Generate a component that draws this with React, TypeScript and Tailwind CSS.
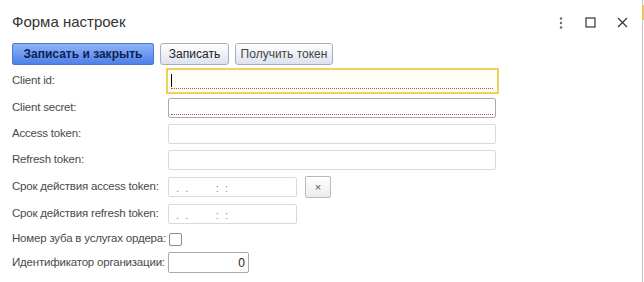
import React from "react";

const font = { fontFamily: '"Liberation Sans", Arial, sans-serif' };

function Label({ children }: { children: React.ReactNode }) {
  return <div className="w-[156px] shrink-0 whitespace-nowrap text-[11.5px] tracking-[-0.2px] text-[#4a4a4a] leading-none">{children}</div>;
}

function Field({ w = "w-[328px]", strong = false, underline = false, children }: { w?: string; strong?: boolean; underline?: boolean; children?: React.ReactNode }) {
  return (
    <div className={`relative h-[20px] ${w} rounded-[2px] border bg-white ${strong ? "border-[#a9a9a9]" : "border-[#d9d9d9]"}`}>
      {children}
      {underline && <div className="absolute left-[2px] right-[2px] bottom-[2px] border-b border-dotted border-[#c05050]" />}
    </div>
  );
}

export default function App() {
  return (
    <div className="relative w-[644px] h-[282px] bg-white overflow-hidden" style={font}>
      <div className="absolute right-[1px] top-0 bottom-0 w-[1px] bg-[#c4c4c4]" />
      <div className="absolute right-0 top-[5px] h-[15px] w-[2px] bg-[#f0c060]" />
      {/* header */}
      <div className="flex items-center h-[40px] pl-[12px] pr-[16px] pt-[5px]">
        <div className="text-[15px] text-[#333] flex-1">Форма настроек</div>
        <div className="flex items-center gap-[19px]">
          <svg width="4" height="12" viewBox="0 0 4 12">
            <circle cx="2" cy="1.5" r="1.2" fill="#666" />
            <circle cx="2" cy="6" r="1.2" fill="#666" />
            <circle cx="2" cy="10.5" r="1.2" fill="#666" />
          </svg>
          <svg width="11" height="11" viewBox="0 0 11 11" className="ml-[3px]">
            <rect x="1" y="1" width="9" height="9" fill="none" stroke="#333" strokeWidth="1.2" />
          </svg>
          <svg width="11" height="11" viewBox="0 0 11 11" className="ml-[2px]">
            <path d="M1 1L10 10M10 1L1 10" stroke="#333" strokeWidth="1.2" />
          </svg>
        </div>
      </div>
      {/* buttons */}
      <div className="flex items-center gap-[6px] pl-[12px] h-[22px] mt-[3px]">
        <button className="h-[22px] w-[142px] rounded-[2px] border border-[#4a78d8] bg-gradient-to-b from-[#8fb3f6] to-[#4f80ea] text-[12px] font-bold text-[#0d1f55]">Записать и закрыть</button>
        <button className="h-[22px] w-[69px] rounded-[3px] border border-[#a6aec0] bg-gradient-to-b from-[#ffffff] to-[#dce2ee] text-[12px] text-[#222]">Записать</button>
        <button className="h-[22px] w-[98px] rounded-[3px] border border-[#a6aec0] bg-gradient-to-b from-[#ffffff] to-[#dce2ee] text-[12px] text-[#444]">Получить токен</button>
      </div>
      {/* form */}
      <div className="flex flex-col pl-[12px]">
        <div className="flex items-center h-[26px] mt-[3px]">
          <Label>Client id:</Label>
          <div className="relative -ml-[2px] h-[26px] w-[333px] border-2 border-[#ecd25a] bg-[#fffef6]">
            <div className="absolute left-[3px] top-[4px] h-[13px] w-[1px] bg-black" />
            <div className="absolute left-[3px] right-[4px] bottom-[3px] border-b border-dotted border-[#c05050]" />
          </div>
        </div>
        <div className="flex items-center h-[21px] mt-[3px]">
          <Label>Client secret:</Label>
          <Field strong underline />
        </div>
        <div className="flex items-center h-[20px] mt-[6px]">
          <Label>Access token:</Label>
          <Field />
        </div>
        <div className="flex items-center h-[20px] mt-[6px]">
          <Label>Refresh token:</Label>
          <Field />
        </div>
        <div className="flex items-center h-[22px] mt-[6px]">
          <Label>Срок действия access token:</Label>
          <Field w="w-[129px]">
            <span className="absolute left-[7px] top-[2px] text-[11px] text-[#888] whitespace-pre">.  .         :  :</span>
          </Field>
          <button className="ml-[8px] h-[22px] w-[26px] rounded-[2px] border border-[#b8b8b8] bg-gradient-to-b from-white to-[#ececec] text-[11px] text-[#555] leading-none">×</button>
        </div>
        <div className="flex items-center h-[20px] mt-[6px]">
          <Label>Срок действия refresh token:</Label>
          <Field w="w-[129px]">
            <span className="absolute left-[7px] top-[2px] text-[11px] text-[#888] whitespace-pre">.  .         :  :</span>
          </Field>
        </div>
        <div className="flex items-center h-[14px] mt-[8px]">
          <Label>Номер зуба в услугах ордера:</Label>
          <div className="ml-[1px] h-[13px] w-[13px] rounded-[2px] border border-[#8c8c8c] bg-white" />
        </div>
        <div className="flex items-center h-[21px] mt-[6px]">
          <Label>Идентификатор организации:</Label>
          <div className="h-[21px] w-[81px] rounded-[2px] border border-[#a9a9a9] bg-white flex items-center justify-end pr-[3px] text-[12px] text-[#222]">0</div>
        </div>
      </div>
    </div>
  );
}
